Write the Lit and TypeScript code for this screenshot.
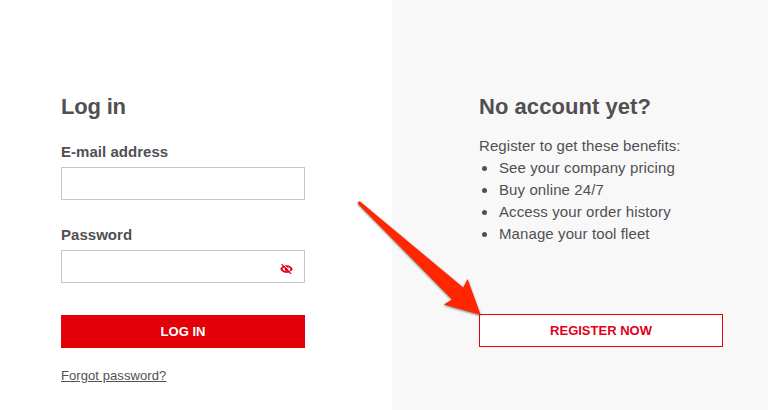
import { LitElement, html, css } from "lit";
import { customElement } from "lit/decorators.js";

@customElement("app-root")
export class AppRoot extends LitElement {
  static styles = css`
    :host {
      display: grid;
      grid-template-columns: 392px 376px;
      position: relative;
      width: 768px;
      height: 410px;
      overflow: hidden;
      background: #fff;
      color: #524f53;
      font-family: "Liberation Sans", Arial, sans-serif;
      font-size: 15px;
      line-height: 22px;
    }
    * { box-sizing: border-box; }
    .panel { padding: 93px 87px 0 61px; }
    .register { background: #f8f8f8; padding: 93px 45px 0 87px; }
    h2 {
      margin: 0;
      font-size: 22px;
      line-height: 28px;
      letter-spacing: 0.05px;
      font-weight: 700;
    }
    .panel h2 { letter-spacing: -0.2px; }
    label {
      display: block;
      font-weight: 700;
      line-height: 20px;
      letter-spacing: 0.03px;
    }
    .email { margin-top: 21px; }
    .password { margin-top: 25px; }
    .field {
      display: flex;
      align-items: center;
      width: 244px;
      height: 33px;
      margin-top: 5px;
      padding: 0 11px 0 8px;
      border: 1px solid #cbc6bd;
      background: #fff;
    }
    .field input {
      flex: 1;
      min-width: 0;
      border: 0;
      outline: 0;
      background: none;
      font: inherit;
    }
    .eye { display: block; margin-top: 5px; }
    button {
      display: block;
      width: 244px;
      height: 33px;
      padding: 0;
      border: 1px solid #e30008;
      border-radius: 0;
      font: 700 13px/31px "Liberation Sans", Arial, sans-serif;
    }
    .primary { margin-top: 32px; background: #e30008; color: #fff; }
    .secondary { margin-top: 69px; background: #fff; color: #e2001a; }
    .forgot {
      display: block;
      margin-top: 18px;
      color: inherit;
      font-size: 13px;
      line-height: 20px;
      letter-spacing: 0.08px;
    }
    p { margin: 14px 0 0; letter-spacing: 0.07px; }
    ul { margin: 0; padding: 0; list-style: none; letter-spacing: 0.1px; }
    li { display: flex; align-items: center; }
    li::before {
      content: "";
      width: 5px;
      height: 5px;
      margin: 0 12px 0 3px;
      border-radius: 50%;
      background: #524f53;
    }
    .arrow {
      position: absolute;
      left: 350px;
      top: 195px;
      filter: drop-shadow(0 1px 1.2px rgba(0, 0, 0, 0.5));
      pointer-events: none;
    }
  `;

  render() {
    return html`
      <section class="panel">
        <h2>Log in</h2>
        <label class="email" for="email">E-mail address</label>
        <div class="field"><input id="email" type="email" /></div>
        <label class="password" for="password">Password</label>
        <div class="field">
          <input id="password" type="password" />
          <svg class="eye" width="13" height="12" viewBox="0 0 13 12" fill="none" stroke="#e2001a">
            <path d="M1.2 6C3.6 2 9.4 2 11.8 6C9.4 10 3.6 10 1.2 6Z" stroke-width="1.6" />
            <circle cx="6.5" cy="6" r="1.9" fill="#e2001a" stroke="none" />
            <path d="M2.9 0.9L11.8 9.8" stroke="#fff" stroke-width="0.9" />
            <path d="M1.6 1.1L11.2 10.9" stroke-width="1.2" />
          </svg>
        </div>
        <button class="primary">LOG IN</button>
        <a class="forgot" href="#">Forgot password?</a>
      </section>
      <section class="register">
        <h2>No account yet?</h2>
        <p>Register to get these benefits:</p>
        <ul>
          <li>See your company pricing</li>
          <li>Buy online 24/7</li>
          <li>Access your order history</li>
          <li>Manage your tool fleet</li>
        </ul>
        <button class="secondary">REGISTER NOW</button>
      </section>
      <svg class="arrow" width="140" height="128" viewBox="350 195 140 128">
        <path
          fill="#ff2600"
          d="M360.4 201.8Q359 201 358.1 202.1Q357.4 203.3 358.6 204.5L452 299.5L443.8 304.5L480.7 315L467.6 279L463.3 287.5Z"
        />
      </svg>
    `;
  }
}
